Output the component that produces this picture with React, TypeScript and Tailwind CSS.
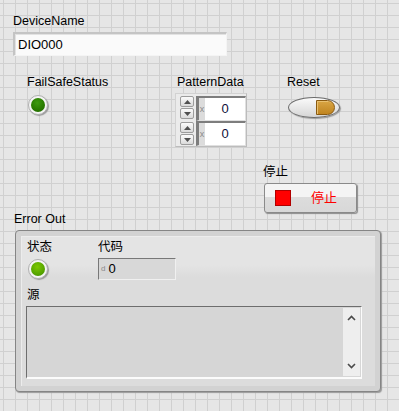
const font = "font-['Liberation_Sans','Noto_Sans_CJK_SC',sans-serif]";

function Label({ children, className = '' }: { children: React.ReactNode; className?: string }) {
  return <div className={`text-[12.5px] leading-4 text-black whitespace-nowrap ${className}`}>{children}</div>;
}

function Led({ light, className = '' }: { light?: boolean; className?: string }) {
  const fill = light
    ? 'bg-[radial-gradient(circle_at_45%_35%,#7cc800_0%,#5aa800_55%,#3f8a00_100%)]'
    : 'bg-[radial-gradient(circle_at_45%_35%,#3d9a10_0%,#2a7c00_55%,#1d6200_100%)]';
  return (
    <div className={`w-5 h-5 rounded-full bg-[#f4f4f4] border border-[#b0b0b0] p-[2px] shadow-[1px_1px_1px_#9a9a9a] ${className}`}>
      <div className={`w-full h-full rounded-full ${fill}`} />
    </div>
  );
}

function SpinButton({ down }: { down?: boolean }) {
  return (
    <div className="w-[14px] h-[11px] rounded-[2px] border border-[#9c9c9c] bg-[linear-gradient(to_bottom,#fbfbfb,#dadada)] flex items-center justify-center">
      <svg width="7" height="4" viewBox="0 0 7 4">
        <path d={down ? 'M0 0 L7 0 L3.5 4 Z' : 'M0 4 L7 4 L3.5 0 Z'} fill="#505050" />
      </svg>
    </div>
  );
}

function NumCell() {
  return (
    <div className="w-[50px] h-[25px] border-t-2 border-l-[3px] border-[#7d7d7d] border-b border-r border-b-[#e0e0e0] border-r-[#e0e0e0] bg-white flex">
      <div className="w-[6px] bg-[#dcdcdc] text-[9px] leading-none text-[#8a8a8a] flex items-center justify-center">x</div>
      <div className="flex-1 flex items-center justify-center text-[13px] text-[#10103a]">0</div>
    </div>
  );
}

function Chevron({ down }: { down?: boolean }) {
  return (
    <svg width="9" height="6" viewBox="0 0 9 6">
      <path d={down ? 'M1 1 L4.5 4.5 L8 1' : 'M1 5 L4.5 1.5 L8 5'} fill="none" stroke="#4a4a4a" strokeWidth="1.6" />
    </svg>
  );
}

export default function App() {
  return (
    <div
      className={`relative w-[399px] h-[411px] overflow-hidden bg-[#e6e6e6] bg-[linear-gradient(to_right,#d0d0d0_1px,transparent_1px),linear-gradient(to_bottom,#d0d0d0_1px,transparent_1px)] [background-size:12px_12px] [background-position:3px_3px] ${font}`}
    >
      {/* DeviceName */}
      <div className="pl-[13px] pt-[13px]">
        <Label>DeviceName</Label>
        <div className="mt-[3px] w-[214px] h-6 bg-[#fafafa] border-t-2 border-l-2 border-[#c4c4c4] border-b border-r border-b-[#f4f4f4] border-r-[#f4f4f4] shadow-[inset_1px_1px_0_#e2e2e2] flex items-center pl-[3px] text-[13px] text-black">
          DIO000
        </div>
      </div>

      {/* Row: FailSafeStatus, PatternData, Reset */}
      <div className="mt-[18px] flex items-start">
        <div className="ml-[27px] w-[148px]">
          <Label>FailSafeStatus</Label>
          <Led className="mt-[5px] ml-[1px]" />
        </div>
        <div className="w-[112px]">
          <Label className="ml-[2px]">PatternData</Label>
          <div className="mt-[3px] w-[72px] h-[54px] border border-[#d2d2d2] border-b-[#bcbcbc] border-r-[#bcbcbc] bg-[#ebebeb] flex pl-[4px] pt-[2px] gap-[2px]">
            <div className="flex flex-col gap-[3px]">
              <div className="flex flex-col gap-[1px]">
                <SpinButton />
                <SpinButton down />
              </div>
              <div className="flex flex-col gap-[1px]">
                <SpinButton />
                <SpinButton down />
              </div>
            </div>
            <div className="flex flex-col">
              <NumCell />
              <NumCell />
            </div>
          </div>
        </div>
        <div>
          <Label>Reset</Label>
          <div className="mt-[7px] ml-[1px] w-[52px] h-[21px] rounded-[50%] border border-[#6c6c6c] bg-[linear-gradient(to_bottom,#fafafa,#d6d6d6)] shadow-[1px_1px_1px_#9c9c9c] flex items-center justify-end pr-[4px]">
            <div className="w-[19px] h-[15px] rounded-l-[2px] rounded-r-full border border-[#8a5a10] bg-[linear-gradient(to_bottom,#d9a544,#c08520)] shadow-[inset_1px_1px_0_#e8c070]" />
          </div>
        </div>
      </div>

      {/* Stop */}
      <div className="mt-[17px] ml-[263px]">
        <Label>停止</Label>
        <div className="mt-[3px] ml-[1px] w-[93px] h-[30px] rounded-[3px] border border-[#8a8a8a] bg-[linear-gradient(to_bottom,#f4f4f4_0%,#f4f4f4_45%,#dcdcdc_48%,#d8d8d8_100%)] shadow-[1px_1px_1px_#8c8c8c] flex items-center pl-[10px]">
          <div className="w-4 h-4 bg-[#ff0000] border border-[#b00000]" />
          <div className="ml-[20px] text-[13px] leading-4 text-[#ff0000]">停止</div>
        </div>
      </div>

      {/* Error Out */}
      <div className="-mt-[2px] ml-[14px]">
        <Label>Error Out</Label>
        <div className="mt-[3px] ml-[1px] w-[366px] h-[162px] rounded-[4px] border border-[#858585] bg-[#d2d2d2] p-[5px] shadow-[1px_1px_1px_#9a9a9a]">
          <div className="h-full border-t border-l border-[#ececec] bg-[linear-gradient(to_bottom,#e4e4e4_0px,#e4e4e4_28px,#dcdcdc_40px,#dcdcdc_100%)] pl-[4px] pt-[2px]">
            <div className="flex items-start">
              <div className="w-[72px] pl-[1px]">
                <Label>状态</Label>
                <Led light className="mt-[4px] ml-[1px]" />
              </div>
              <div>
                <Label>代码</Label>
                <div className="mt-[3px] w-[78px] h-[22px] border-t border-l border-[#787878] border-b border-r border-b-[#f0f0f0] border-r-[#f0f0f0] bg-[#d8d8d8] flex items-center pl-[2px]">
                  <span className="text-[8px] leading-none text-[#8a8a8a]">d</span>
                  <span className="ml-[3px] text-[13px] text-black">0</span>
                </div>
              </div>
            </div>
            <Label className="mt-[7px] ml-[1px]">源</Label>
            <div className="mt-[3px] w-[336px] h-[73px] border-t border-l border-[#6e6e6e] border-b-2 border-r border-b-[#fbfbfb] border-r-[#fbfbfb] bg-[#d6d6d6] flex justify-end p-[1px] pr-[1px]">
              <div className="w-[17px] h-full bg-[#eeeeee] flex flex-col items-center justify-between py-[7px]">
                <Chevron />
                <Chevron down />
              </div>
            </div>
          </div>
        </div>
      </div>
    </div>
  );
}
